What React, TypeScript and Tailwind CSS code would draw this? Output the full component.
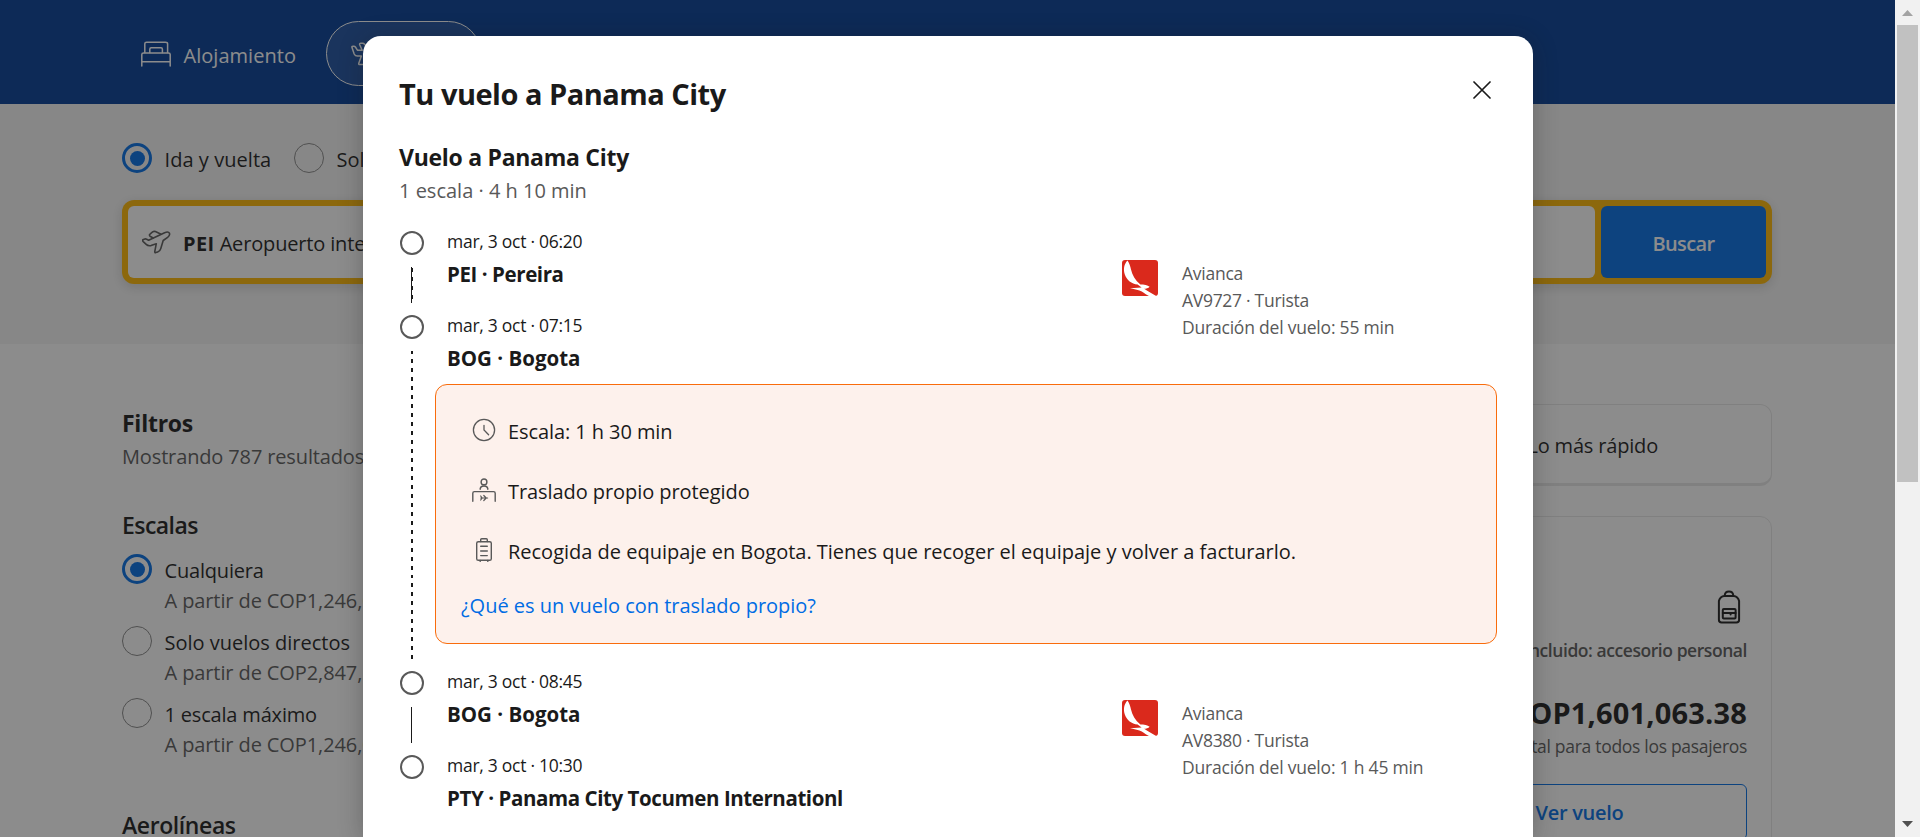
import type { ReactNode } from "react";

function BedIcon() {
  return (
    <svg width="30" height="26" viewBox="0 0 30 26" fill="none" stroke="#fff" strokeWidth="1.5" strokeLinecap="round" strokeLinejoin="round" className="shrink-0">
      <path d="M3.8 11.5V2.8Q3.8 1.2 5.6 1.2H24.4Q26.6 1.2 26.6 2.8V11.5" />
      <path d="M8.8 11.5V8.2Q8.8 6.8 10.2 6.8H20Q21.4 6.8 21.4 8.2V11.5" />
      <path d="M.8 25V13.6Q.8 12 2.6 12H27.4Q29.2 12 29.2 13.6V25M.8 20.7H29.2" />
    </svg>
  );
}

function TakeoffIcon() {
  return (
    <svg width="29" height="24" viewBox="0 0 29 24" fill="none" stroke="#595959" strokeWidth="1.6" strokeLinecap="round" strokeLinejoin="round" className="shrink-0">
      <path d="M6.6 10.2 22.6 2.7Q26.4 1.2 27.4 3.2Q28.3 5.2 25.6 7.3L21.2 10.5L18.7 18.8Q18 21.3 15.7 22L13.8 22.6Q12.5 22.8 12.8 21.4L14.3 13.7L9 15.6Q6 16.2 4.2 14.4L1.2 11.6Q-.1 10 1.4 9.5L2.9 9Q3.9 8.7 4.7 9.3Z" />
      <path d="M11.2 8 8 6.2Q6.8 5 8 4.1L10.6 1.9Q11.9 1 13.4 1.5L18.6 3.9" />
    </svg>
  );
}

function FlightIcon() {
  return (
    <svg width="29" height="24" viewBox="0 0 29 24" fill="none" stroke="#fff" strokeWidth="1.5" strokeLinecap="round" strokeLinejoin="round" className="shrink-0">
      <path d="M11.2 8.3 8.7 2.7Q8.3 1.2 9.8 1.2H11.6Q12.8 1.2 13.6 2.2L18.6 8.3H24Q27.6 8.6 27.6 11.2Q27.6 13.9 24 14.1H18.6L13.6 21.6Q12.8 22.6 11.6 22.6H8.8Q7.4 22.6 7.8 21.2L10.4 14.1H6.4Q4.2 14.1 3.2 12L1 5.6Q.6 4.2 2 4.2H2.8Q3.8 4.2 4.4 5L6.6 8.3Z" />
    </svg>
  );
}

function ClockIcon() {
  return (
    <svg width="24" height="24" viewBox="0 0 24 24" fill="none" stroke="#595959" strokeWidth="1.3" strokeLinecap="round">
      <circle cx="12" cy="12" r="10.6" />
      <path d="M12 7.3V12l4.6 4.7" />
    </svg>
  );
}

function DeskIcon() {
  return (
    <svg width="24" height="24" viewBox="0 0 24 24" fill="none" stroke="#595959" strokeWidth="1.4" strokeLinecap="round" strokeLinejoin="round">
      <circle cx="12" cy="3.9" r="2.9" />
      <path d="M8.2 11.2V10.6Q8.7 8 12 8T15.8 10.6V11.2" />
      <path d="M.8 23.2V15.2Q.8 13.6 2.4 13.6H21.6Q23.2 13.6 23.2 15.2V23.2" />
      <path d="M8.7 18 10.2 20 8.7 22M8.7 20H15.6M11.8 17.5 14.2 20 11.8 22.5" strokeWidth="1.2" />
    </svg>
  );
}

function SuitcaseIcon() {
  return (
    <svg width="24" height="24" viewBox="0 0 24 24" fill="none" stroke="#595959" strokeWidth="1.4" strokeLinecap="round" strokeLinejoin="round">
      <rect x="4.7" y="3.7" width="14.6" height="18.6" rx="1.6" />
      <path d="M8.7 3.5V1.8Q8.7.8 9.7.8H14.3Q15.3.8 15.3 1.8V3.5M8.7 8.2H15.3M8.7 13H15.3M8.7 17.6H15.3M8.2 22.5V23.4M15.8 22.5V23.4" />
    </svg>
  );
}

function BackpackIcon() {
  return (
    <svg width="24" height="34" viewBox="0 0 24 34" fill="none" stroke="#1a1a1a" strokeWidth="2" strokeLinecap="round" strokeLinejoin="round">
      <path d="M7.5 5.9Q3 6.2 1.9 11V29.8Q1.9 32.6 4.6 32.6H19.4Q22.1 32.6 22.1 29.8V11Q21 6.2 16.5 5.9Z" />
      <path d="M7.7 5.6Q7.9 1.4 12 1.4T16.3 5.6" />
      <rect x="5.8" y="19" width="12.8" height="9.6" rx="1" />
      <path d="M5.8 22.9H18.6M13.6 23V24.4" />
    </svg>
  );
}

function AviancaLogo() {
  return (
    <svg width="36" height="36" viewBox="0 0 36 36" className="block shrink-0 rounded-[3px]">
      <rect width="36" height="36" fill="#da291c" />
      <path fill="#fff" d="M5.4.6C1.9 4.6 1.2 9.6 2.8 14.4C4.7 20 9.6 23.8 15.6 24.6L19.6 27.6L8 28.2C13.2 29 16.8 30 19.8 31.6C22.6 33.4 24.2 35 27 36H34.2L25.2 30.8L22.2 28.8C24.2 28.8 26.4 28.2 27.6 26.8C25.8 25.2 21.8 24.6 18.4 24.6C13.2 20.2 10.2 14.6 9 9.4C8.4 6.4 7 2.4 5.4.6Z" />
    </svg>
  );
}

function Radio({ checked = false }: { checked?: boolean }) {
  return checked ? (
    <span className="flex size-[30px] shrink-0 items-center justify-center rounded-full border-[3px] border-[#006ce4]">
      <span className="size-[15px] rounded-full bg-[#006ce4]" />
    </span>
  ) : (
    <span className="block size-[30px] shrink-0 rounded-full border border-[#868686]" />
  );
}

function Filter({ label, from, checked, track }: { label: string; from: string; checked?: boolean; track: string }) {
  return (
    <div className="flex h-[60px] gap-[12.5px]">
      <div className="-mt-px">
        <Radio checked={checked} />
      </div>
      <div className="pt-px text-[20px] leading-[30px] whitespace-nowrap">
        <div className={track}>{label}</div>
        <div className="tracking-[-0.1px] text-[#595959]">{from}</div>
      </div>
    </div>
  );
}

function Stop({ time, place, track, rail }: { time: string; place: string; track: string; rail: ReactNode }) {
  return (
    <div className="flex h-[61px]">
      <div className="flex w-[26px] shrink-0 flex-col items-center pt-[3px]">
        <span className="size-6 shrink-0 rounded-full border-2 border-[#595959]" />
        {rail}
      </div>
      <div className="ml-[22px] flex flex-col gap-1 whitespace-nowrap">
        <div className="text-[17.5px] leading-[27px] tracking-[-0.27px]">{time}</div>
        <div className={track}>{place}</div>
      </div>
    </div>
  );
}

function Carrier({ code, duration }: { code: string; duration: string }) {
  return (
    <div className="mt-8 flex w-[375px] shrink-0 items-start gap-6">
      <AviancaLogo />
      <div className="text-[17.5px] leading-[27px] whitespace-nowrap text-[#595959]">
        <div className="tracking-[-0.26px]">Avianca</div>
        <div className="tracking-[-0.29px]">{code}</div>
        <div className="tracking-[-0.21px]">{duration}</div>
      </div>
    </div>
  );
}

function Note({ icon, children, track }: { icon: ReactNode; children: ReactNode; track: string }) {
  return (
    <div className="flex h-[30px] items-start gap-3 pl-9 text-[20px] leading-[30px]">
      <span className="pt-0.5">{icon}</span>
      <span className={track}>{children}</span>
    </div>
  );
}

function FlightDialog() {
  return (
    <section className="absolute top-9 left-[363px] h-[801px] w-[1170px] overflow-hidden rounded-t-[18px] bg-white px-9 pt-[37px] shadow-[0_3px_24px_rgba(26,26,26,0.3)]">
      <div className="flex items-start justify-between">
        <h1 className="text-[29px] leading-[42px] font-bold tracking-[-0.5px]">Tu vuelo a Panama City</h1>
        <svg width="18" height="18" viewBox="0 0 18 18" stroke="#1a1a1a" strokeWidth="1.7" strokeLinecap="round" className="mt-2 mr-1.5">
          <path d="M1 1 17 17M17 1 1 17" />
        </svg>
      </div>
      <h2 className="mt-6 text-[23px] leading-9 font-bold tracking-[-0.28px]">Vuelo a Panama City</h2>
      <p className="pt-px text-[20px] leading-[30px] text-[#595959]">1 escala · 4 h 10 min</p>

      <div className="mt-[22px] flex h-[145px] justify-between">
        <div className="flex flex-col gap-[23px]">
          <Stop
            time="mar, 3 oct · 06:20"
            place="PEI · Pereira"
            track="text-[20.5px] leading-[30px] font-bold tracking-[-0.42px]"
            rail={
              <span className="mt-3 flex h-9 w-0.5 shrink-0">
                <span className="w-px bg-[#1a1a1a]" />
                <span className="w-px bg-[repeating-linear-gradient(to_bottom,transparent_0_1.5px,#1a1a1a_1.5px_5.5px,transparent_5.5px_9px)]" />
              </span>
            }
          />
          <Stop
            time="mar, 3 oct · 07:15"
            place="BOG · Bogota"
            track="text-[20.5px] leading-[30px] font-bold"
            rail={
              <span className="mt-3 h-[308px] w-0.5 shrink-0 bg-[repeating-linear-gradient(to_bottom,#1a1a1a_0_3px,transparent_3px_8px,#1a1a1a_8px_8.98px)]" />
            }
          />
        </div>
        <Carrier code="AV9727 · Turista" duration="Duración del vuelo: 55 min" />
      </div>

      <div className="mt-[11px] ml-9 h-[260px] rounded-xl border border-[#f96c0c] bg-[#fdf1ec] pt-[31px] whitespace-nowrap">
        <div className="flex flex-col gap-[30px]">
          <Note icon={<ClockIcon />} track="pt-px tracking-[-0.08px]">Escala: 1 h 30 min</Note>
          <Note icon={<DeskIcon />} track="pt-px tracking-[-0.07px]">Traslado propio protegido</Note>
          <Note icon={<SuitcaseIcon />} track="pt-px tracking-[-0.01px]">
            Recogida de equipaje en Bogota. Tienes que recoger el equipaje y volver a facturarlo.
          </Note>
        </div>
        <div className="mt-[25px] pl-[25px] text-[20px] leading-[30px] tracking-[-0.01px] text-[#006ce4]">¿Qué es un vuelo con traslado propio?</div>
      </div>

      <div className="mt-6 flex h-[145px] justify-between">
        <div className="flex flex-col gap-[23px]">
          <Stop
            time="mar, 3 oct · 08:45"
            place="BOG · Bogota"
            track="text-[20.5px] leading-[30px] font-bold"
            rail={<span className="mt-3 mr-px h-9 w-px shrink-0 bg-[#1a1a1a]" />}
          />
          <Stop
            time="mar, 3 oct · 10:30"
            place="PTY · Panama City Tocumen Internationl"
            track="text-[20.5px] leading-[30px] font-bold tracking-[-0.42px]"
            rail={null}
          />
        </div>
        <Carrier code="AV8380 · Turista" duration="Duración del vuelo: 1 h 45 min" />
      </div>
    </section>
  );
}

export default function App() {
  return (
    <div className="relative flex h-[837px] w-full overflow-hidden bg-white font-['Open_Sans','Noto_Sans',sans-serif] text-[#1a1a1a]">
      <div className="flex w-[1895px] shrink-0 flex-col">
        <header className="flex h-[104px] shrink-0 items-start bg-[#003b95] pt-[21px] pl-[141px] text-[20px] leading-[30px] text-white">
          <div className="flex h-[65px] w-[185px] items-center gap-[12.5px]">
            <BedIcon />
            <span className="pt-1 tracking-[0.03px]">Alojamiento</span>
          </div>
          <div className="flex h-[65px] w-[155px] items-center gap-3 rounded-full border border-white bg-white/10 pl-6">
            <FlightIcon />
            <span className="pt-1">Vuelos</span>
          </div>
        </header>

        <div className="h-60 shrink-0 bg-[#f5f5f5] pt-[39px] pr-[123px] pl-[122px]">
          <div className="flex h-[31px] items-start text-[20px] leading-[30px] whitespace-nowrap">
            <Radio checked />
            <span className="mt-0.5 ml-[12.5px] w-[129.5px] tracking-[0.05px]">Ida y vuelta</span>
            <Radio />
            <span className="mt-0.5 ml-[12.5px]">Solo ida</span>
          </div>
          <div className="mt-[26px] flex h-[84px] gap-1.5 rounded-xl bg-[#ffb700] p-1.5 shadow-[0_3px_12px_rgba(26,26,26,0.16)]">
            <div className="flex flex-1 items-center rounded-md bg-white pl-3.5 text-[20px] leading-[30px] whitespace-nowrap">
              <TakeoffIcon />
              <span className="ml-3 pt-1">
                <b className="tracking-[0.4px]">PEI</b>
                <span className="tracking-[-0.16px]"> Aeropuerto internacional Matecaña</span>
              </span>
            </div>
            <div className="flex w-[165px] items-center justify-center rounded-md bg-[#006ce4] pt-1 text-[20px] leading-[30px] font-semibold tracking-[-0.6px] text-white">
              Buscar
            </div>
          </div>
        </div>

        <main className="flex flex-1 justify-between pr-[123px] pl-[122px]">
          <aside className="w-[330px] pt-[61px]">
            <h2 className="text-[23px] leading-9 font-bold tracking-[-0.25px]">Filtros</h2>
            <p className="pt-px text-[20px] leading-[30px] tracking-[-0.14px] whitespace-nowrap text-[#595959]">Mostrando 787 resultados</p>
            <h3 className="mt-[35px] text-[23px] leading-9 font-semibold tracking-[-0.55px]">Escalas</h3>
            <div className="mt-3 flex flex-col gap-3">
              <Filter label="Cualquiera" from="A partir de COP1,246,064.00" checked track="tracking-[-0.18px]" />
              <Filter label="Solo vuelos directos" from="A partir de COP2,847,210.00" track="tracking-normal" />
              <Filter label="1 escala máximo" from="A partir de COP1,246,064.00" track="tracking-[-0.18px]" />
            </div>
            <h3 className="mt-12 text-[23px] leading-9 font-semibold tracking-[-0.4px]">Aerolíneas</h3>
          </aside>

          <div className="w-[1278px] pt-[60px]">
            <div className="flex h-[82px] justify-end rounded-xl border border-b-[3px] border-[#e7e7e7] pt-[26px] pr-[113px] text-[20px] leading-[30px] tracking-[-0.18px]">
              Lo más rápido
            </div>
            <div className="mt-[30px] flex h-[400px] flex-col items-end rounded-xl border border-[#e7e7e7] pt-[73px] pr-6 whitespace-nowrap">
              <div className="mr-1.5 h-[34px]">
                <BackpackIcon />
              </div>
              <div className="mt-[13px] text-[17.5px] leading-[27px] font-semibold tracking-[-0.44px] text-[#595959]">Incluido: accesorio personal</div>
              <div className="mt-7 h-[41px] text-[29px] leading-[42px] font-bold tracking-[0.18px]">COP1,601,063.38</div>
              <div className="text-[17.5px] leading-[27px] tracking-[-0.3px] text-[#595959]">Total para todos los pasajeros</div>
              <div className="mt-6 flex h-[56px] w-[335px] items-center justify-center rounded-md border border-[#006ce4] pt-0.5 text-[20px] leading-[30px] font-semibold tracking-[-0.29px] text-[#006ce4]">
                Ver vuelo
              </div>
            </div>
          </div>
        </main>
      </div>

      <div className="absolute top-0 left-0 h-full w-[1895px] bg-[#1a1a1a]/50" />
      <FlightDialog />

      <div className="flex w-[25px] shrink-0 flex-col items-center justify-between bg-[#f1f1f1]">
        <div className="flex w-full flex-col items-center">
          <svg width="25" height="25" viewBox="0 0 25 25">
            <path d="M7 16 12.5 10 18 16Z" fill="#a3a3a3" />
          </svg>
          <div className="h-[457px] w-[21px] bg-[#c1c1c1]" />
        </div>
        <svg width="25" height="25" viewBox="0 0 25 25">
          <path d="M7 9 12.5 15 18 9Z" fill="#505050" />
        </svg>
      </div>
    </div>
  );
}
